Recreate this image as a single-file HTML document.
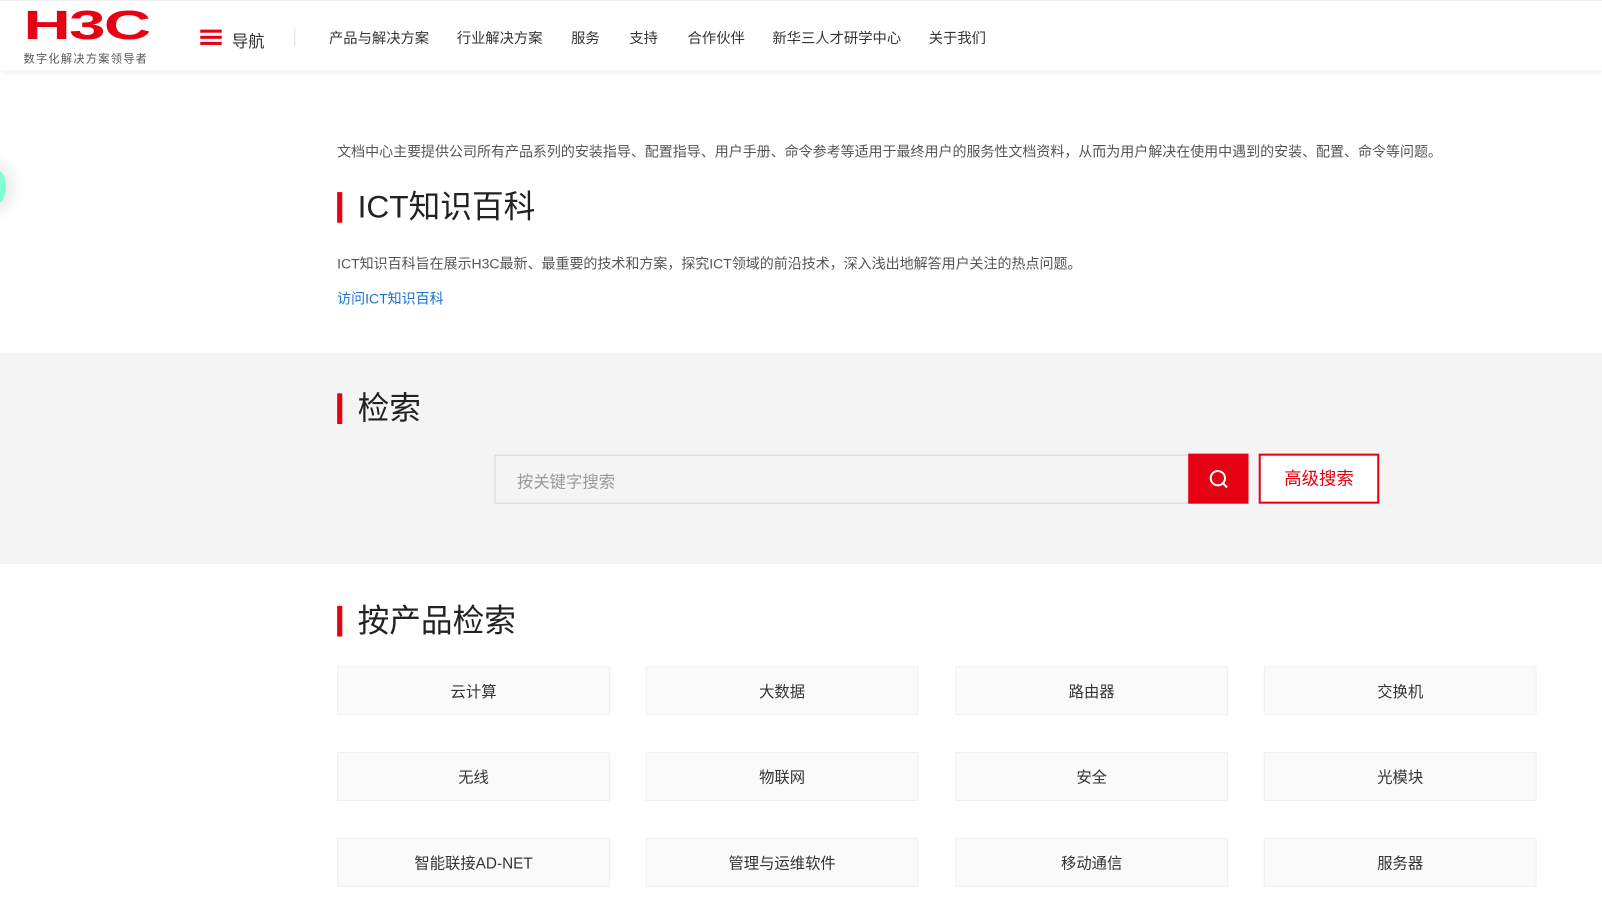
<!DOCTYPE html>
<html><head><meta charset="utf-8"><style>
*{margin:0;padding:0;box-sizing:border-box}
body{width:1602px;height:899px;overflow:hidden;background:#fff;font-family:"Liberation Sans","Noto Sans CJK SC",sans-serif;color:#333;position:relative}
.w{position:absolute;left:0;top:0;width:1568px;height:880px;transform:scale(1.02168);transform-origin:0 0}
.hdr{position:absolute;left:0;top:0;width:1568px;height:69px;background:#fff;box-shadow:0 2px 6px rgba(0,0,0,.08);border-top:1px solid #eee;z-index:2}
.logo{position:absolute;left:23px;top:8px;color:#e60012;font:bold 40px/32px "Liberation Sans",sans-serif;letter-spacing:-1px;transform:scaleX(1.6);transform-origin:left}
.slogan{position:absolute;left:23px;top:48px;font-size:11px;color:#555;letter-spacing:1.2px}
.ham{position:absolute;left:196px;top:28px;width:21px}
.ham i{display:block;height:3px;background:#e60012;margin-bottom:3px}
.navt{position:absolute;left:227px;top:26px;font-size:16px;color:#333}
.sep{position:absolute;left:288px;top:27px;width:1px;height:17px;background:#ddd}
.nav{position:absolute;top:26px;font-size:14px;color:#333}
.p{position:absolute;left:330px;font-size:13.7px;color:#555}
.h{position:absolute;left:330px;font-size:31px;color:#222;padding-left:20px;line-height:34px}
.h:before{content:"";position:absolute;left:0;top:2px;width:5px;height:30px;background:#e60012}
.grey{position:absolute;left:0;top:345px;width:1568px;height:207px;background:#f4f4f4}
.inp{position:absolute;left:484px;top:445px;width:680px;height:48px;background:#f4f4f4;border:1px solid #d5d5d5;border-right:none;font-size:16px;color:#999;padding:12px 21px}
.btn{position:absolute;left:1163px;top:444px;width:59px;height:49px;background:#e60012}
.adv{position:absolute;left:1232px;top:444px;width:118px;height:49px;border:2px solid #e60012;background:#fff;color:#e60012;font-size:17px;text-align:center;line-height:45px}
.b{position:absolute;width:267px;height:48px;background:#fafafa;border:1px solid #f0f0f0;text-align:center;line-height:50px;font-size:15px;color:#333}
.dot{position:absolute;left:-14px;top:166px;width:20px;height:34px;border-radius:50%;background:#7fffd4;box-shadow:0 0 14px 8px rgba(0,0,0,.08)}
</style></head><body><div class="w">
<div class="hdr">
<div class="logo">H3C</div>
<div class="slogan">数字化解决方案领导者</div>
<div class="ham"><i></i><i></i><i></i></div>
<div class="navt">导航</div>
<div class="sep"></div>
<div class="nav" style="left:322px">产品与解决方案</div>
<div class="nav" style="left:447px">行业解决方案</div>
<div class="nav" style="left:559px">服务</div>
<div class="nav" style="left:616px">支持</div>
<div class="nav" style="left:673px">合作伙伴</div>
<div class="nav" style="left:756px">新华三人才研学中心</div>
<div class="nav" style="left:909px">关于我们</div>
</div>
<div class="dot"></div>
<div class="p" style="top:137px">文档中心主要提供公司所有产品系列的安装指导、配置指导、用户手册、命令参考等适用于最终用户的服务性文档资料，从而为用户解决在使用中遇到的安装、配置、命令等问题。</div>
<div class="h" style="top:186px">ICT知识百科</div>
<div class="p" style="top:247px">ICT知识百科旨在展示H3C最新、最重要的技术和方案，探究ICT领域的前沿技术，深入浅出地解答用户关注的热点问题。</div>
<div class="p" style="top:281px;color:#1a73c9">访问ICT知识百科</div>
<div class="grey"></div>
<div class="h" style="top:383px">检索</div>
<div class="inp">按关键字搜索</div>
<div class="btn"><svg width="59" height="49" viewBox="0 0 59 49"><circle cx="29" cy="24" r="7" fill="none" stroke="#fff" stroke-width="2"/><line x1="34" y1="29" x2="38" y2="33" stroke="#fff" stroke-width="2"/></svg></div>
<div class="adv">高级搜索</div>
<div class="h" style="top:591px">按产品检索</div>
<div class="b" style="left:330px;top:652px">云计算</div>
<div class="b" style="left:632px;top:652px">大数据</div>
<div class="b" style="left:935px;top:652px">路由器</div>
<div class="b" style="left:1237px;top:652px">交换机</div>
<div class="b" style="left:330px;top:736px">无线</div>
<div class="b" style="left:632px;top:736px">物联网</div>
<div class="b" style="left:935px;top:736px">安全</div>
<div class="b" style="left:1237px;top:736px">光模块</div>
<div class="b" style="left:330px;top:820px">智能联接AD-NET</div>
<div class="b" style="left:632px;top:820px">管理与运维软件</div>
<div class="b" style="left:935px;top:820px">移动通信</div>
<div class="b" style="left:1237px;top:820px">服务器</div>
</div></body></html>
